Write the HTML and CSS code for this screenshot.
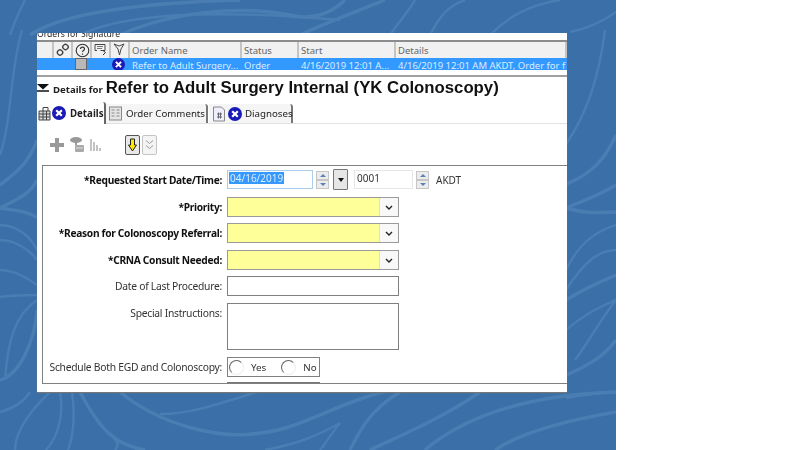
FILE: index.html
```html
<!DOCTYPE html>
<html lang="en">
<head>
<meta charset="utf-8">
<title>Orders for Signature</title>
<link rel="stylesheet" href="styles.css">
</head>
<body>
<div class="stage">
  <svg class="swirls" viewBox="0 0 616 450" aria-hidden="true">
    <g class="swirl-wide">
      <path d="M120 392C160 425 220 440 260 433C300 430 340 400 400 388"/>
      <path d="M400 392C370 410 360 430 350 450"/>
      <path d="M480 392C440 420 390 440 370 450"/>
      <path d="M616 392C520 395 460 420 425 450"/>
      <path d="M616 412C540 425 510 440 495 450"/>
      <path d="M80 392C100 430 115 445 145 450"/>
      <path d="M120 35C170 12 240 5 290 15C310 20 330 15 345 0"/>
      <path d="M30 35C70 8 170 2 240 0"/>
      <path d="M300 35C320 25 360 10 385 0"/>
      <path d="M566 184C590 175 605 160 616 135"/>
      <path d="M566 208C585 200 600 195 616 185"/>
      <path d="M566 208C590 215 605 212 616 212"/>
      <path d="M566 300C590 285 605 280 616 275"/>
      <path d="M566 375C590 365 605 355 616 340"/>
      <path d="M0 185C20 170 30 160 37 140"/>
      <path d="M0 208C15 200 30 195 37 180"/>
      <path d="M0 208C15 210 30 212 37 218"/>
      <path d="M0 380C20 375 35 340 37 310"/>
    </g>
    <g class="swirl-thin">
      <path d="M160 414C190 415 230 400 270 388"/>
      <path d="M340 423C310 440 290 445 265 450"/>
      <path d="M340 423C330 435 325 445 320 450"/>
      <path d="M50 392C20 420 15 440 15 450"/>
      <path d="M60 392C65 420 55 440 46 450"/>
      <path d="M72 392C76 420 72 440 68 450"/>
      <path d="M105 430C118 440 120 445 115 450"/>
      <path d="M0 412C15 408 25 400 30 392"/>
      <path d="M80 35C120 15 200 8 340 20"/>
      <path d="M10 35C15 20 20 10 25 0"/>
      <path d="M390 35C400 20 410 10 415 0"/>
      <path d="M430 35C440 15 450 5 465 0"/>
      <path d="M490 35C510 15 530 5 560 0"/>
      <path d="M570 32C590 28 605 20 616 12"/>
      <path d="M566 144C590 110 600 70 605 30"/>
      <path d="M566 270C580 240 600 230 616 225"/>
      <path d="M566 290C585 260 600 250 616 250"/>
      <path d="M566 330C590 310 605 305 616 300"/>
      <path d="M575 360C590 340 600 320 616 300"/>
      <path d="M566 398C590 394 605 392 616 392"/>
      <path d="M22 30C10 70 12 120 0 155"/>
      <path d="M0 225C15 225 30 235 37 250"/>
      <path d="M0 240C15 240 30 250 37 260"/>
      <path d="M0 270C15 270 30 280 37 285"/>
      <path d="M0 297C15 295 30 295 37 295"/>
      <path d="M37 300C15 315 8 340 5 380"/>
    </g>
  </svg>
  <main class="window">
    <div class="caption"><span>Orders for Signature</span></div>
    <div class="grid-head">
      <span class="cell c0"></span>
      <span class="cell c1"><svg width="14" height="14" viewBox="0 0 14 14"><g fill="none" stroke="#444" stroke-width="1.400"><rect x="7" y="1.500" width="5" height="5" rx="2" transform="rotate(45 9.500 4)"/><rect x="1.500" y="7" width="5" height="5" rx="2" transform="rotate(45 4 9.500)"/></g></svg></span>
      <span class="cell c2"><svg width="15" height="15" viewBox="0 0 15 15"><circle cx="7.500" cy="7.500" r="6.300" fill="none" stroke="#333" stroke-width="1.100"/><path d="M5.500 6c0-2.600 4-2.600 4 0 0 1.500-2 1.500-2 3M7.500 10.500v1.300" fill="none" stroke="#333" stroke-width="1.200"/></svg></span>
      <span class="cell c3"><svg width="14" height="14" viewBox="0 0 14 14"><path d="M1 1.500h10v6H6.500M1 1.500v6h2" fill="none" stroke="#444"/><path d="M3 3.500h6M3 5.500h5" stroke="#777"/><path d="M9 7.500l2.500 2-2.500 2.500" fill="none" stroke="#333"/></svg></span>
      <span class="cell c4"><svg width="13" height="14" viewBox="0 0 13 14"><path d="M1 1l5 2 5-2-3 5-1.500 6L5 6z" fill="none" stroke="#444"/></svg></span>
      <span class="cell name">Order Name</span>
      <span class="cell status">Status</span>
      <span class="cell start">Start</span>
      <span class="cell details-col">Details</span>
    </div>
    <div class="grid-row">
      <span class="cell c0"></span>
      <span class="cell c1"></span>
      <span class="cell c2"><i class="check"></i></span>
      <span class="cell c3"></span>
      <span class="cell c4"><svg class="x-badge" viewBox="0 0 14 14"><circle cx="7" cy="7" r="7" fill="#1a1ab8"/><path d="M4.200 4.200l5.600 5.600M9.800 4.200l-5.600 5.600" stroke="#fff" stroke-width="2.200"/></svg></span>
      <span class="cell name">Refer to Adult Surgery...</span>
      <span class="cell status">Order</span>
      <span class="cell start">4/16/2019 12:01 A...</span>
      <span class="cell details-col">4/16/2019 12:01 AM AKDT, Order for f</span>
    </div>
    <div class="title-bar">
      <svg class="collapse" width="13" height="8" viewBox="0 0 13 8"><path d="M0 0h12L6 5.500z" fill="#111"/><path d="M0 7h12" stroke="#111" stroke-width="1.500"/></svg>
      <span class="details-for">Details for</span>
      <h1>Refer to Adult Surgery Internal (YK Colonoscopy)</h1>
    </div>
    <div class="tabs">
      <div class="tab active">
        <svg width="13" height="15" viewBox="0 0 13 15"><path d="M1 5h11v9H1z" fill="#ddd" stroke="#444"/><path d="M1 8h11M1 11h11M5 5v9M8.500 5v9" stroke="#444"/><path d="M5 5V1.500h5V5" fill="none" stroke="#444"/></svg>
        <svg class="x-badge tab-x" viewBox="0 0 14 14"><circle cx="7" cy="7" r="7" fill="#1a1ab8"/><path d="M4.200 4.200l5.600 5.600M9.800 4.200l-5.600 5.600" stroke="#fff" stroke-width="2.200"/></svg>
        <span>Details</span>
      </div>
      <div class="tab comments">
        <svg width="13" height="15" viewBox="0 0 13 15"><rect x=".5" y="1" width="12" height="13" fill="#e4e4e4" stroke="#888"/><path d="M2.500 4h3M2.500 7h3M2.500 10h3M7.500 4h3M7.500 7h3M7.500 10h3" stroke="#888"/></svg>
        <span>Order Comments</span>
      </div>
      <div class="tab diagnoses">
        <svg width="13" height="16" viewBox="0 0 13 16"><path d="M.5 1h8l3 3v11H.5z" fill="#eef" stroke="#888"/><path d="M4 8h5M4 11h5M5.500 6.500v6M7.500 6.500v6" stroke="#666"/></svg>
        <svg class="x-badge" viewBox="0 0 14 14"><circle cx="7" cy="7" r="7" fill="#1a1ab8"/><path d="M4.200 4.200l5.600 5.600M9.800 4.200l-5.600 5.600" stroke="#fff" stroke-width="2.200"/></svg>
        <span>Diagnoses</span>
      </div>
    </div>
    <div class="toolbar">
      <svg width="14" height="14" viewBox="0 0 14 14"><path d="M5 0h4v5h5v4H9v5H5V9H0V5h5z" fill="#999"/></svg>
      <svg class="tool-db" width="14" height="15" viewBox="0 0 14 15"><ellipse cx="6" cy="3" rx="6" ry="3" fill="#999"/><rect x="5" y="5" width="2" height="3" fill="#999"/><rect x="5" y="8" width="9" height="7" rx="1" fill="#aaa"/><path d="M6 11h7" stroke="#ddd"/></svg>
      <svg class="tool-bars" width="13" height="14" viewBox="0 0 13 14"><path d="M1 1v12M4 4v9M7 7v6M10 10v3" stroke="#aaa" stroke-width="1.400"/></svg>
      <button class="tool-btn pressed" type="button"><svg width="9" height="14" viewBox="0 0 9 14"><path d="M2.500 1h4v6H8.500L4.500 13 .5 7h2z" fill="#ffe800" stroke="#222"/></svg></button>
      <button class="tool-btn" type="button"><svg width="9" height="12" viewBox="0 0 9 12"><path d="M1 1.500l3.500 3 3.500-3M1 6.500l3.500 3 3.500-3" fill="none" stroke="#999"/></svg></button>
    </div>
    <section class="group">
      <div class="row row-date">
        <label class="req">*Requested Start Date/Time:</label>
        <div class="date-input"><span class="sel">04/16/2019</span></div>
        <div class="spin"><i class="up"></i><i class="down"></i></div>
        <button class="cal" type="button"><i></i></button>
        <div class="time-input">0001</div>
        <div class="spin"><i class="up"></i><i class="down"></i></div>
        <span class="tz">AKDT</span>
      </div>
      <div class="row row-combo gap-8">
        <label class="req">*Priority:</label>
        <div class="combo"><div class="combo-val"></div><div class="combo-btn"><svg width="8" height="5" viewBox="0 0 8 5"><path d="M1 1l3 3 3-3" fill="none" stroke="#222" stroke-width="1.400"/></svg></div></div>
      </div>
      <div class="row row-combo gap-6">
        <label class="req">*Reason for Colonoscopy Referral:</label>
        <div class="combo"><div class="combo-val"></div><div class="combo-btn"><svg width="8" height="5" viewBox="0 0 8 5"><path d="M1 1l3 3 3-3" fill="none" stroke="#222" stroke-width="1.400"/></svg></div></div>
      </div>
      <div class="row row-combo gap-7">
        <label class="req">*CRNA Consult Needed:</label>
        <div class="combo"><div class="combo-val"></div><div class="combo-btn"><svg width="8" height="5" viewBox="0 0 8 5"><path d="M1 1l3 3 3-3" fill="none" stroke="#222" stroke-width="1.400"/></svg></div></div>
      </div>
      <div class="row row-last gap-6">
        <label>Date of Last Procedure:</label>
        <div class="text-input"></div>
      </div>
      <div class="row row-area gap-7">
        <label>Special Instructions:</label>
        <div class="text-area"></div>
      </div>
      <div class="row row-radio">
        <label>Schedule Both EGD and Colonoscopy:</label>
        <div class="radios">
          <i class="radio"></i><span class="yes">Yes</span>
          <i class="radio"></i><span class="no">No</span>
        </div>
      </div>
      <div class="next-field"></div>
    </section>
  </main>
</div>
</body>
</html>
```
FILE: styles.css
```css
* { box-sizing: border-box; }
html, body { margin: 0; height: 100%; background: #fff; }
body { font-family: "Noto Sans", "Liberation Sans", sans-serif; color: #222; overflow: hidden; }
.stage { position: relative; width: 616px; height: 450px; background: #3a6fa7; padding: 33px 0 0 37px; }
.swirls { position: absolute; inset: 0; width: 616px; height: 450px; }
.swirls path { fill: none; stroke: #4a7db2; }
.swirl-wide path { stroke-width: 3.500; }
.swirl-thin path { stroke-width: 2.500; }
.window { position: relative; width: 530px; height: 359px; background: #fff; overflow: hidden; box-shadow: 0 1px 1px #777; filter: blur(.4px); }
.caption { height: 7px; font-size: 8.600px; line-height: 10px; overflow: hidden; color: #222; position: relative; }
.caption span { display: block; margin-top: -4px; white-space: nowrap; }
.grid-head { display: flex; height: 18px; background: #f1f1f1; border-top: 2px solid #8c8c8c; font-size: 9.500px; color: #666; }
.grid-row { display: flex; height: 12px; background: #3399ff; color: #dcecff; font-size: 9.500px; overflow: hidden; }
.cell { flex: none; display: flex; align-items: center; white-space: nowrap; overflow: hidden; padding-left: 2px; }
.grid-head .cell { border-right: 2px solid #c4c4c4; }
.grid-head .c1, .grid-head .c2, .grid-head .c3, .grid-head .c4 { padding-left: 2px; }
.grid-row .cell { line-height: 12px; padding-top: 3px; }
.c0 { width: 17px; }
.c1 { width: 19px; }
.c2 { width: 19px; }
.c3 { width: 19px; }
.c4 { width: 19px; }
.name { width: 112px; }
.status { width: 57px; }
.start { width: 97px; }
.details-col { width: 171px; }
.check { display: block; width: 12px; height: 12px; background: #b9b9b9; border: 1px solid #666; margin-left: 2px; }
.grid-row .c2 { padding: 0; }
.grid-row .c4 { padding: 0 0 0 1px; }
.x-badge { width: 14px; height: 14px; flex: none; }
.grid-row .x-badge { width: 13px; height: 13px; }
.title-bar { display: flex; align-items: center; height: 23px; margin-top: 5px; border-top: 2px solid #a0a0a0; padding-top: 1px; }
.collapse { margin-right: 3px; }
.details-for { font-size: 9.600px; font-weight: 700; color: #222; margin-right: 3px; margin-top: 2px; }
h1 { margin: 0; font: 700 16.750px "Liberation Sans", sans-serif; color: #111; white-space: nowrap; }
.tabs { display: flex; align-items: flex-end; height: 26px; border-bottom: 1px solid #e2e2e2; }
.tab { display: flex; align-items: center; height: 19px; font-size: 9.700px; background: #f5f5f5; border-right: 2px solid #777; border-top-right-radius: 3px; white-space: nowrap; }
.tab svg { flex: none; }
.tab.active { height: 22px; background: #fff; margin-bottom: -1px; width: 69px; font-weight: 700; color: #222; padding-left: 1px; border-right-color: #666; }
.tab-x { margin-left: 1px; margin-right: 4px; }
.comments { width: 102px; gap: 4px; padding-left: 3px; }
.diagnoses { width: 84px; padding-left: 4px; gap: 2px; margin-left: 1px; }
.diagnoses .x-badge { margin-right: 1px; }
.toolbar { display: flex; align-items: center; height: 41px; padding-left: 13px; }
.tool-db { margin-left: 6px; }
.tool-bars { margin-left: 6px; }
.tool-btn { width: 15px; height: 20px; padding: 0; margin: 0; display: flex; align-items: center; justify-content: center; background: #f4f4f4; border: 1px solid #c4c4c4; border-radius: 2px; }
.tool-btn.pressed { margin-left: 22px; margin-right: 2px; border-color: #555; background: #e8e8e8; }
.group { margin-left: 5px; height: 219px; border: 1px solid #808080; border-right: 0; overflow: hidden; position: relative; }
.row { display: flex; align-items: center; }
.row label { flex: none; width: 179px; text-align: right; font-size: 10.300px; letter-spacing: -.26px; color: #333; white-space: nowrap; margin-right: 5px; }
.row label.req { font-size: 10.200px; letter-spacing: -.3px; font-weight: 700; color: #111; }
.row-date { height: 19px; margin-top: 4px; }
.date-input { width: 86px; height: 19px; border: 1px solid #a9cdea; padding: 1px 0 0 1px; font-size: 10px; line-height: 12px; }
.sel { display: inline-block; background: #3399ff; color: #dcecff; padding: 0 1px; }
.spin { display: flex; flex-direction: column; width: 13px; height: 18px; margin-left: 3px; }
.spin i { flex: 1; display: block; background: #ececec; border: 1px solid #c6c6c6; position: relative; }
.spin .up::after, .spin .down::after { content: ""; position: absolute; left: 3px; width: 0; height: 0; border-left: 3px solid transparent; border-right: 3px solid transparent; }
.spin .up::after { top: 2px; border-bottom: 3px solid #5f7fb8; }
.spin .down::after { top: 2px; border-top: 3px solid #5f7fb8; }
.cal { width: 15px; height: 21px; margin-left: 4px; padding: 0; background: #e6e6e6; border: 1px solid #777; border-radius: 1px; display: flex; align-items: center; justify-content: center; }
.cal i { display: block; width: 0; height: 0; border-left: 3.500px solid transparent; border-right: 3.500px solid transparent; border-top: 4px solid #111; }
.time-input { width: 59px; height: 19px; margin-left: 6px; border: 1px solid #e6e6e6; padding: 1px 0 0 2px; font-size: 10px; line-height: 12px; color: #333; }
.tz { margin-left: 7px; font-size: 10px; color: #333; }
.gap-6 { margin-top: 6px; }
.gap-7 { margin-top: 7px; }
.gap-8 { margin-top: 8px; }
.row-combo { height: 20px; }
.combo { display: flex; width: 172px; height: 20px; border: 1px solid #9a9a9a; }
.combo-val { flex: 1; background: #ffff99; border-right: 1px solid #ddd; }
.combo-btn { width: 18px; background: #f8f8f8; display: flex; align-items: center; justify-content: center; }
.row-last { height: 20px; }
.text-input { width: 172px; height: 20px; border: 1px solid #808080; }
.row-area { align-items: flex-start; height: 47px; }
.row-area label { padding-top: 3px; }
.text-area { width: 172px; height: 47px; border: 1px solid #808080; }
.row-radio { height: 20px; margin-top: 7px; }
.radios { width: 93px; height: 20px; border: 1px solid #808080; display: flex; align-items: center; font-size: 9.800px; color: #333; padding-left: 1px; }
.radio { flex: none; display: block; width: 15px; height: 15px; border-radius: 50%; border: 1px solid #eee; border-left-color: #666; border-top-color: #666; }
.yes { margin: 0 15px 0 7px; }
.no { margin-left: 7px; }
.next-field { position: absolute; left: 184px; bottom: 0; width: 93px; height: 1px; background: #777; }
```
